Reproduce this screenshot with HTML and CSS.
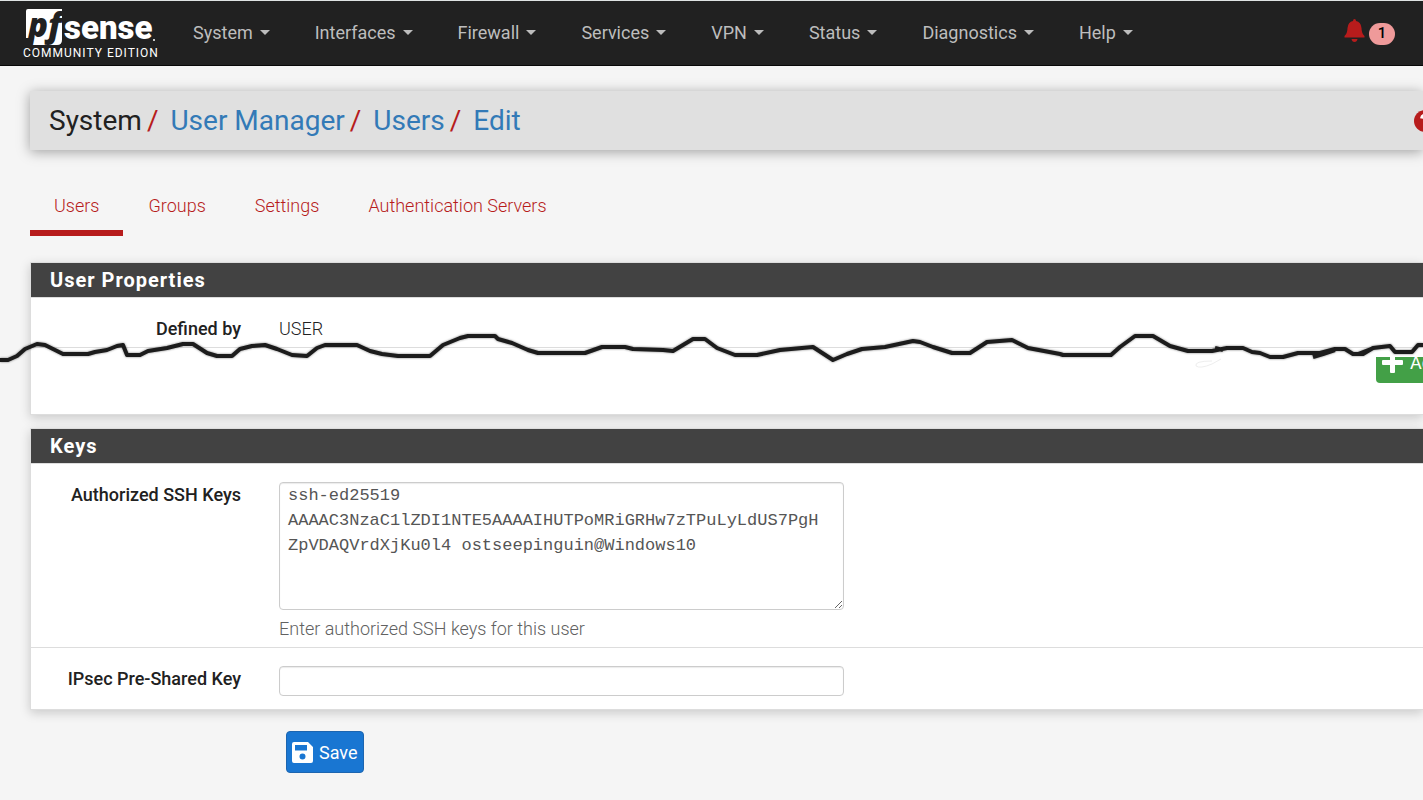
FILE: index.html
```html
<!DOCTYPE html>
<html lang="en">
<head>
<meta charset="utf-8">
<title>System: User Manager: Users: Edit</title>
<link rel="stylesheet" href="styles.css">
</head>
<body>
<header class="topbar">
  <a class="brand" href="#">
    <svg class="brand-mark" viewBox="0 0 134 38" role="img" aria-label="pfsense">
      <path class="tile" d="M5 1H39V32Q39 37 34 37H7L9 30H3V3Q3 1 5 1Z"/>
      <text class="tile-text" x="5" y="29">pf</text>
      <text class="word" x="41" y="31">sense</text>
      <circle cx="131" cy="32" r="1"/>
    </svg>
    <span class="edition">COMMUNITY EDITION</span>
  </a>
  <nav class="menu">
    <a href="#">System<i class="caret"></i></a>
    <a href="#">Interfaces<i class="caret"></i></a>
    <a href="#">Firewall<i class="caret"></i></a>
    <a href="#">Services<i class="caret"></i></a>
    <a href="#">VPN<i class="caret"></i></a>
    <a href="#">Status<i class="caret"></i></a>
    <a href="#">Diagnostics<i class="caret"></i></a>
    <a href="#">Help<i class="caret"></i></a>
  </nav>
  <a class="notices" href="#" aria-label="Notices">
    <svg width="21" height="24" viewBox="0 0 21 24"><path d="M10.500 0Q12 0 12 2Q17 3 17.500 9Q17.500 14 20.500 17V18.500H.5V17Q3.500 14 3.500 9Q4 3 9 2Q9 0 10.500 0ZM7.500 20H13.500Q13 23 10.500 23Q8 23 7.500 20Z"/></svg>
    <span class="count">1</span>
  </a>
</header>
<main class="page">
  <div class="crumbs">
    <ol>
      <li>System</li>
      <li><a href="#">User Manager</a></li>
      <li><a href="#">Users</a></li>
      <li><a href="#">Edit</a></li>
    </ol>
    <a class="help" href="#" aria-label="Help for this page">
      <svg width="22" height="22" viewBox="0 0 22 22"><circle cx="11" cy="11" r="11" fill="#b71c1c"/><path d="M7.500 8.500Q8 5 11.500 5Q15 5 15 8Q15 10 13 11Q11.500 12 11.500 13.500M11.500 15.500V18" fill="none" stroke="#fff" stroke-width="3"/></svg>
    </a>
  </div>
  <nav class="tabs">
    <a class="active" href="#">Users</a>
    <a href="#">Groups</a>
    <a href="#">Settings</a>
    <a href="#">Authentication Servers</a>
  </nav>

  <section class="panel">
    <h2>User Properties</h2>
    <div class="row first">
      <span class="label">Defined by</span>
      <span class="value">USER</span>
    </div>
    <div class="actions">
      <button class="add" type="button">
        <svg width="21" height="21" viewBox="0 0 21 21"><path d="M9 0H12Q13 0 13 1V8H20Q21 8 21 9V12Q21 13 20 13H13V20Q13 21 12 21H9Q8 21 8 20V13H1Q0 13 0 12V9Q0 8 1 8H8V1Q8 0 9 0Z" fill="#fff"/></svg>Add</button>
    </div>
    <svg class="tear" width="1423" height="40" viewBox="0 330 1423 40" aria-hidden="true">
      <path class="edge" d="M0 360L8 360 17 356 25 349 37 344 45 345 53 349 63 354 88 354 95 352 107 350 117 346 123 345 127 355 140 355 148 351 167 348 183 344 193 344 207 353 217 356 232 356 240 349 252 346 265 345 277 349 292 355 307 356 317 348 325 345 357 345 370 351 382 354 398 356 430 356 443 345 460 338 468 336 495 336 498 339 512 343 528 350 538 353 585 353 602 347 625 347 633 349 663 350 673 351 693 339 705 339 717 348 735 355 757 355 780 350 813 347 833 360 847 354 862 349 885 347 913 341 920 342 933 347 952 353 970 353 987 342 1012 340 1028 348 1060 354 1063 355 1111 355 1120 347 1135 336 1153 336 1170 346 1188 351 1212 351 1227 348 1243 348 1252 352 1260 353 1270 357 1283 357 1298 353 1320 353 1335 349 1345 349 1353 354 1363 354 1373 348 1390 346 1395 352 1412 352 1418 345 1423 345M1313 357L1323 354 1335 350M1358 354L1371 349M1215 348L1223 350"/>
      <path class="smudge" d="M1212 361Q1194 361 1196 366Q1200 369 1212 364L1221 359"/>
    </svg>
  </section>

  <section class="panel keys">
    <h2>Keys</h2>
    <div class="row">
      <label class="label" for="sshkeys">Authorized SSH Keys</label>
      <div class="field">
        <textarea id="sshkeys" spellcheck="false">ssh-ed25519 AAAAC3NzaC1lZDI1NTE5AAAAIHUTPoMRiGRHw7zTPuLyLdUS7PgHZpVDAQVrdXjKu0l4 ostseepinguin@Windows10</textarea>
        <span class="hint">Enter authorized SSH keys for this user</span>
      </div>
    </div>
    <div class="row psk">
      <label class="label" for="psk">IPsec Pre-Shared Key</label>
      <div class="field"><input id="psk" type="text"></div>
    </div>
  </section>

  <button class="save" type="submit">
    <svg width="21" height="21" viewBox="0 0 21 21"><path fill="#fff" fill-rule="evenodd" d="M2 0H16L21 5V19Q21 21 19 21H2Q0 21 0 19V2Q0 0 2 0ZM3 3V8.500H15V3ZM10.500 11.500A3 3 0 1 0 10.500 17.500A3 3 0 1 0 10.500 11.500Z"/></svg>Save</button>
</main>
</body>
</html>
```
FILE: styles.css
```css
* { box-sizing: border-box; }

body {
  margin: 0;
  min-height: 100vh;
  overflow-x: hidden;
  background: #f5f5f5;
  color: #212121;
  font-family: Roboto, sans-serif;
  font-size: 18px;
  line-height: 25px;
}

a { text-decoration: none; }
button, input, textarea { font: inherit; }

.topbar {
  display: flex;
  align-items: flex-start;
  height: 66px;
  padding: 0 28px 0 23px;
  background: #212121;
  border-top: 1px solid #dfe3e3;
  border-bottom: 1px solid #080808;
}

.brand {
  width: 134px;
  padding-top: 7px;
  color: #fff;
}
.brand-mark {
  display: block;
  width: 134px;
  height: 38px;
  overflow: visible;
  fill: #fff;
}
.tile-text { fill: #212121; font: italic 800 33px "Open Sans", sans-serif; }
.word { font: 900 33px Roboto, sans-serif; }
.edition {
  display: block;
  font-size: 12px;
  font-weight: 400;
  line-height: 14px;
  letter-spacing: 1px;
  white-space: nowrap;
}

.menu {
  display: flex;
  gap: 45px;
  padding: 19px 0 0 36px;
}
.menu a {
  display: flex;
  align-items: center;
  gap: 7px;
  color: #bdbdbd;
}
.caret {
  border: 5px solid transparent;
  border-top-color: #bdbdbd;
  border-bottom: 0;
}

.notices {
  display: flex;
  gap: 4px;
  margin-left: auto;
  padding-top: 18px;
  fill: #b71c1c;
}
.count {
  width: 26px;
  height: 22px;
  margin-top: 4px;
  border-radius: 11px;
  background: #ef9a9a;
  color: #000;
  font-size: 15px;
  font-weight: 500;
  line-height: 21px;
  text-align: center;
}

.page { padding: 25px 0 0 30px; }

.crumbs {
  display: flex;
  align-items: center;
  height: 59px;
  padding-left: 19px;
  background: #e0e0e0;
  box-shadow: 0 2px 12px rgba(0, 0, 0, .35);
  font-size: 28px;
  line-height: 40px;
}
.crumbs ol {
  display: flex;
  margin: 0;
  padding: 0;
  list-style: none;
}
.crumbs li + li::before {
  content: "/";
  padding: 0 12px 0 5px;
  color: #b71c1c;
}
.crumbs li a { color: #337ab7; }
.help {
  display: flex;
  margin-left: auto;
  margin-right: -13px;
}

.tabs {
  display: flex;
  gap: 1px;
  margin-top: 26px;
}
.tabs a {
  padding: 17px 24px 12px;
  border-bottom: 6px solid transparent;
  color: #b71c1c;
  font-weight: 300;
}
.tabs .active { border-bottom-color: #b71c1c; }

.panel {
  position: relative;
  margin-top: 26px;
  background: #fff;
  border: 1px solid #ddd;
  border-right: 0;
  box-shadow: 0 3px 10px rgba(0, 0, 0, .18);
}
.panel h2 {
  margin: 0;
  padding: 5px 19px 4px;
  background: #424242;
  border-bottom: 1px solid #ddd;
  color: #fff;
  font-size: 20px;
  font-weight: 700;
  line-height: 25px;
  letter-spacing: 1px;
}
.panel.keys { margin-top: 13px; }

.row {
  display: grid;
  grid-template-columns: 210px minmax(0, 565px);
  column-gap: 38px;
  padding: 18px 0 6px;
  border-bottom: 1px solid #ddd;
}
.label {
  font-weight: 500;
  text-align: right;
}
.value { font-weight: 300; }
.row:last-child { border-bottom: 0; }

.actions {
  display: flex;
  justify-content: flex-end;
  align-items: flex-end;
  height: 26px;
  margin: 9px 0 31px;
  overflow: hidden;
}
.add {
  display: flex;
  flex-shrink: 0;
  align-items: center;
  gap: 7px;
  height: 42px;
  margin-right: -25px;
  padding: 0 6px;
  border: 0;
  border-radius: 4px;
  background: #43a047;
  color: #fff;
}

.tear {
  position: absolute;
  top: 67px;
  left: -31px;
  fill: none;
}
.edge {
  stroke: #1c1c1c;
  stroke-width: 4;
  stroke-linejoin: round;
  filter: drop-shadow(0 0 1px rgba(0, 0, 0, .5));
}
.smudge { stroke: #eee; }

.field textarea,
.field input {
  display: block;
  width: 100%;
  border: 1px solid #ccc;
  border-radius: 4px;
  background: #fff;
  box-shadow: inset 0 1px 1px rgba(0, 0, 0, .08);
}
.field textarea {
  height: 128px;
  padding: 0 16px 0 8px;
  color: #555;
  font-family: "Liberation Mono", monospace;
  font-size: 17px;
  line-height: 25px;
  overflow: hidden;
  resize: vertical;
}
.field input { height: 30px; }
.hint {
  display: block;
  margin-top: 6px;
  color: #616161;
  font-weight: 300;
}
.psk { padding-bottom: 13px; }

.save {
  display: flex;
  align-items: center;
  gap: 6px;
  height: 42px;
  margin: 21px 0 0 256px;
  padding: 0 5px;
  border: 1px solid #1c65b0;
  border-radius: 4px;
  background: #1976d2;
  color: #fff;
}
```
